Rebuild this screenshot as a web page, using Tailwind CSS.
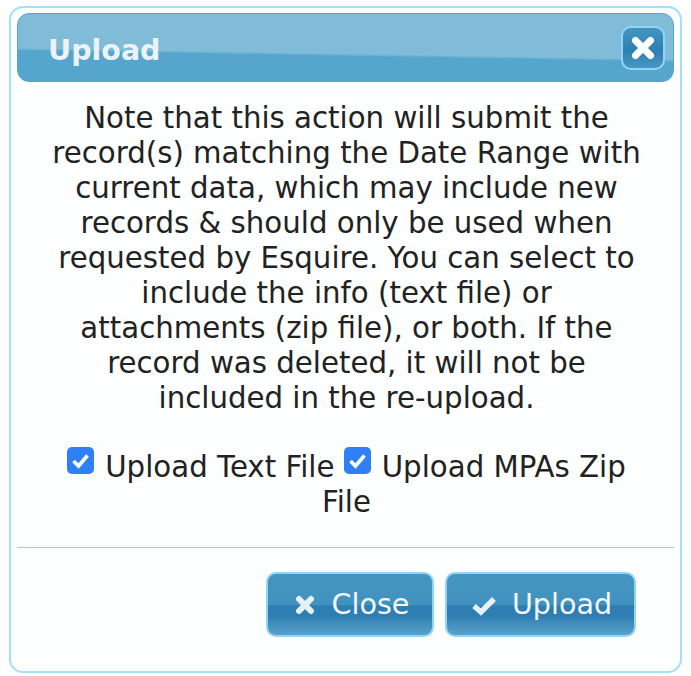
<!DOCTYPE html>
<html lang="en">
<head>
    <meta charset="UTF-8">
    <title>Upload</title>
    <script src="https://cdn.jsdelivr.net/npm/@tailwindcss/browser@4"></script>
</head>
<body class="bg-white font-['DejaVu_Sans',sans-serif] text-[#222222]">
    <div class="w-[691px] h-[676px] pt-[6px] px-[9px]">
        <div class="w-[673px] h-[667px] bg-[#fdfefe] border-2 border-[#a3e0fb] rounded-[14px] px-[6px] pt-[5px]">
            <div class="h-[69px] flex items-center justify-between pl-[30px] pr-[8px] rounded-[12px] border border-[#5a9fd4] bg-[linear-gradient(181deg,#80bbd8_0%,#80bbd8_58%,#56a5cd_61%,#56a5cd_100%)]">
                <span class="pt-[7px] text-[28.5px] font-bold text-[#e9f3f8]">Upload</span>
                <button class="w-[44px] h-[44px] flex items-center justify-center rounded-[10px] border-2 border-[#8fd6f6] bg-[linear-gradient(180deg,#4595c1_0%,#2e7fb4_58%,#4a97c3_100%)]">
                    <svg width="28" height="28" viewBox="0 0 28 28"><path d="M6.5 6.5 L21.5 21.5 M21.5 6.5 L6.5 21.5" stroke="#ffffff" stroke-width="7" stroke-linecap="round"/></svg>
                </button>
            </div>
            <p class="mt-[19px] ml-[32px] w-[595px] text-center text-[29.25px] leading-[35px]">Note that this action will submit the record(s) matching the Date Range with current data, which may include new records &amp; should only be used when requested by Esquire. You can select to include the info (text file) or attachments (zip file), or both. If the record was deleted, it will not be included in the re-upload.</p>
            <div class="mt-[31px] ml-[32px] w-[595px] text-center text-[29.25px] leading-[35px]">
                <svg class="inline-block align-[3px] mr-[11px]" width="27" height="27" viewBox="0 0 27 27"><rect width="27" height="27" rx="5" fill="#2f7ff6"/><path d="M6.5 14 L11.5 19 L20.5 8.5" fill="none" stroke="#ffffff" stroke-width="3.6"/></svg><span>Upload Text File</span>
                <svg class="inline-block align-[3px] mr-[11px]" width="27" height="27" viewBox="0 0 27 27"><rect width="27" height="27" rx="5" fill="#2f7ff6"/><path d="M6.5 14 L11.5 19 L20.5 8.5" fill="none" stroke="#ffffff" stroke-width="3.6"/></svg><span>Upload MPAs Zip File</span>
            </div>
            <div class="mt-[27px] border-t border-[#9fd0ea]"></div>
            <div class="mt-[24px] flex justify-end gap-[11px] pr-[38px]">
                <button class="w-[168px] h-[65px] pl-[2px] flex items-center justify-center gap-[15px] rounded-[10px] border-2 border-[#8fd6f6] text-[28.6px] text-[#f2f8fb] bg-[linear-gradient(180deg,#4595c1_0%,#4292bf_50%,#2e7eb3_52%,#2e7eb3_68%,#5ba1c9_100%)]">
                    <svg width="24" height="22" viewBox="0 0 24 22"><path d="M6 5 L18 17 M18 5 L6 17" stroke="#e4f1f7" stroke-width="6" stroke-linecap="round"/></svg>
                    <span>Close</span>
                </button>
                <button class="w-[191px] h-[65px] pl-[2px] flex items-center justify-center gap-[15px] rounded-[10px] border-2 border-[#8fd6f6] text-[28.6px] text-[#f2f8fb] bg-[linear-gradient(180deg,#4595c1_0%,#4292bf_50%,#2e7eb3_52%,#2e7eb3_68%,#5ba1c9_100%)]">
                    <svg width="26" height="22" viewBox="0 0 26 22"><path d="M3 12 L10 18 L23 5" fill="none" stroke="#e4f1f7" stroke-width="5.5"/></svg>
                    <span>Upload</span>
                </button>
            </div>
        </div>
    </div>
</body>
</html>
